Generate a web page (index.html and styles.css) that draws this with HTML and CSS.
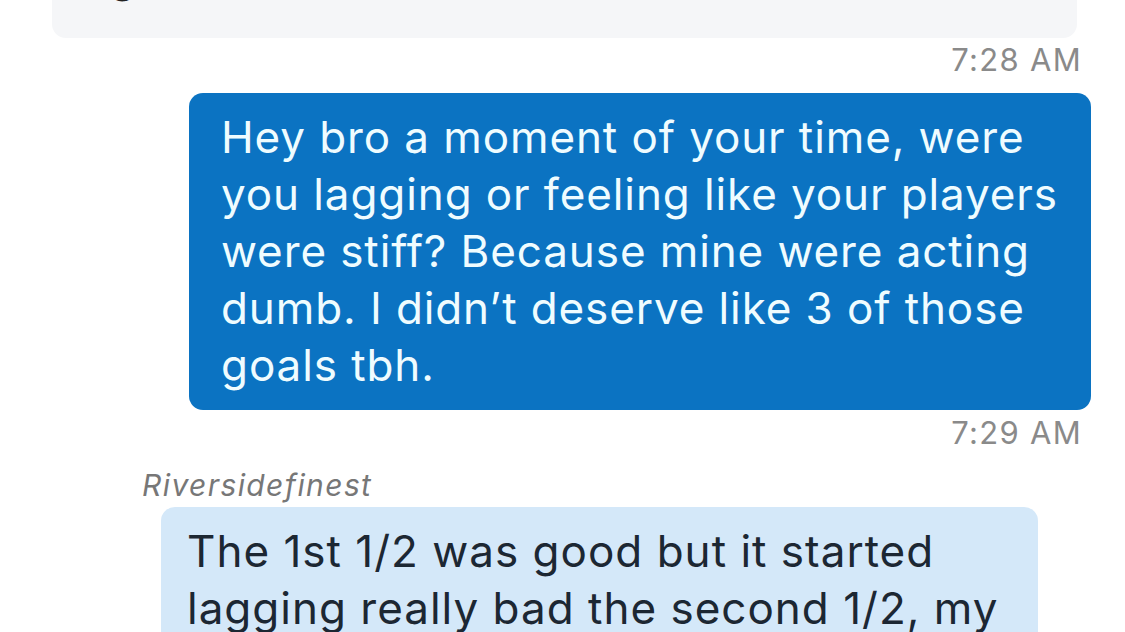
FILE: index.html
```html
<!DOCTYPE html>
<html lang="en">
<head>
    <meta charset="UTF-8">
    <meta name="viewport" content="width=device-width, initial-scale=1.0">
    <title>Chat</title>
    <link rel="stylesheet" href="styles.css">
</head>
<body>
    <div class="chat">
        <div class="bubble grey">Agreed that one was close</div>
        <div class="time">7:28 AM</div>
        <div class="bubble mine">Hey bro a moment of your time, were you lagging or feeling like your players were stiff? Because mine were acting dumb. I didn’t deserve like 3 of those goals tbh.</div>
        <div class="time">7:29 AM</div>
        <div class="name">Riversidefinest</div>
        <div class="bubble theirs">The 1st 1/2 was good but it started lagging really bad the second 1/2, my players wouldn’t respond at all.</div>
    </div>
</body>
</html>
```

FILE: styles.css
```css
body {
    margin: 0;
    background: #ffffff;
    font-family: Inter, "Noto Sans", sans-serif;
    overflow: hidden;
}
.chat {
    display: flex;
    flex-direction: column;
    margin-top: -68px;
}
.bubble {
    font-size: 44px;
    line-height: 57px;
    letter-spacing: 0.9px;
    padding: 16px 30px 16px 32px;
    border-radius: 14px;
    box-sizing: border-box;
}
.grey {
    background: #f5f6f8;
    color: #222;
    width: 1025px;
    margin-left: 52px;
    padding: 16px 26px 33px 26px;
}
.mine {
    background: #0b73c2;
    color: #effcff;
    width: 902px;
    margin-left: 189px;
    margin-top: 15px;
}
.theirs {
    background: #d4e8f9;
    color: #1c2733;
    width: 877px;
    margin-left: 161px;
    margin-top: 4px;
    padding-left: 26px;
    letter-spacing: 1px;
}
.time {
    align-self: flex-end;
    margin-right: 43px;
    margin-top: 4px;
    font-size: 31px;
    line-height: 36px;
    letter-spacing: 1.3px;
    color: #8a8a8a;
}
.mine + .time {
    margin-top: 5px;
}
.name {
    margin-left: 142px;
    margin-top: 16px;
    font-size: 30px;
    line-height: 36px;
    letter-spacing: 1.4px;
    font-style: italic;
    color: #777777;
}
```
